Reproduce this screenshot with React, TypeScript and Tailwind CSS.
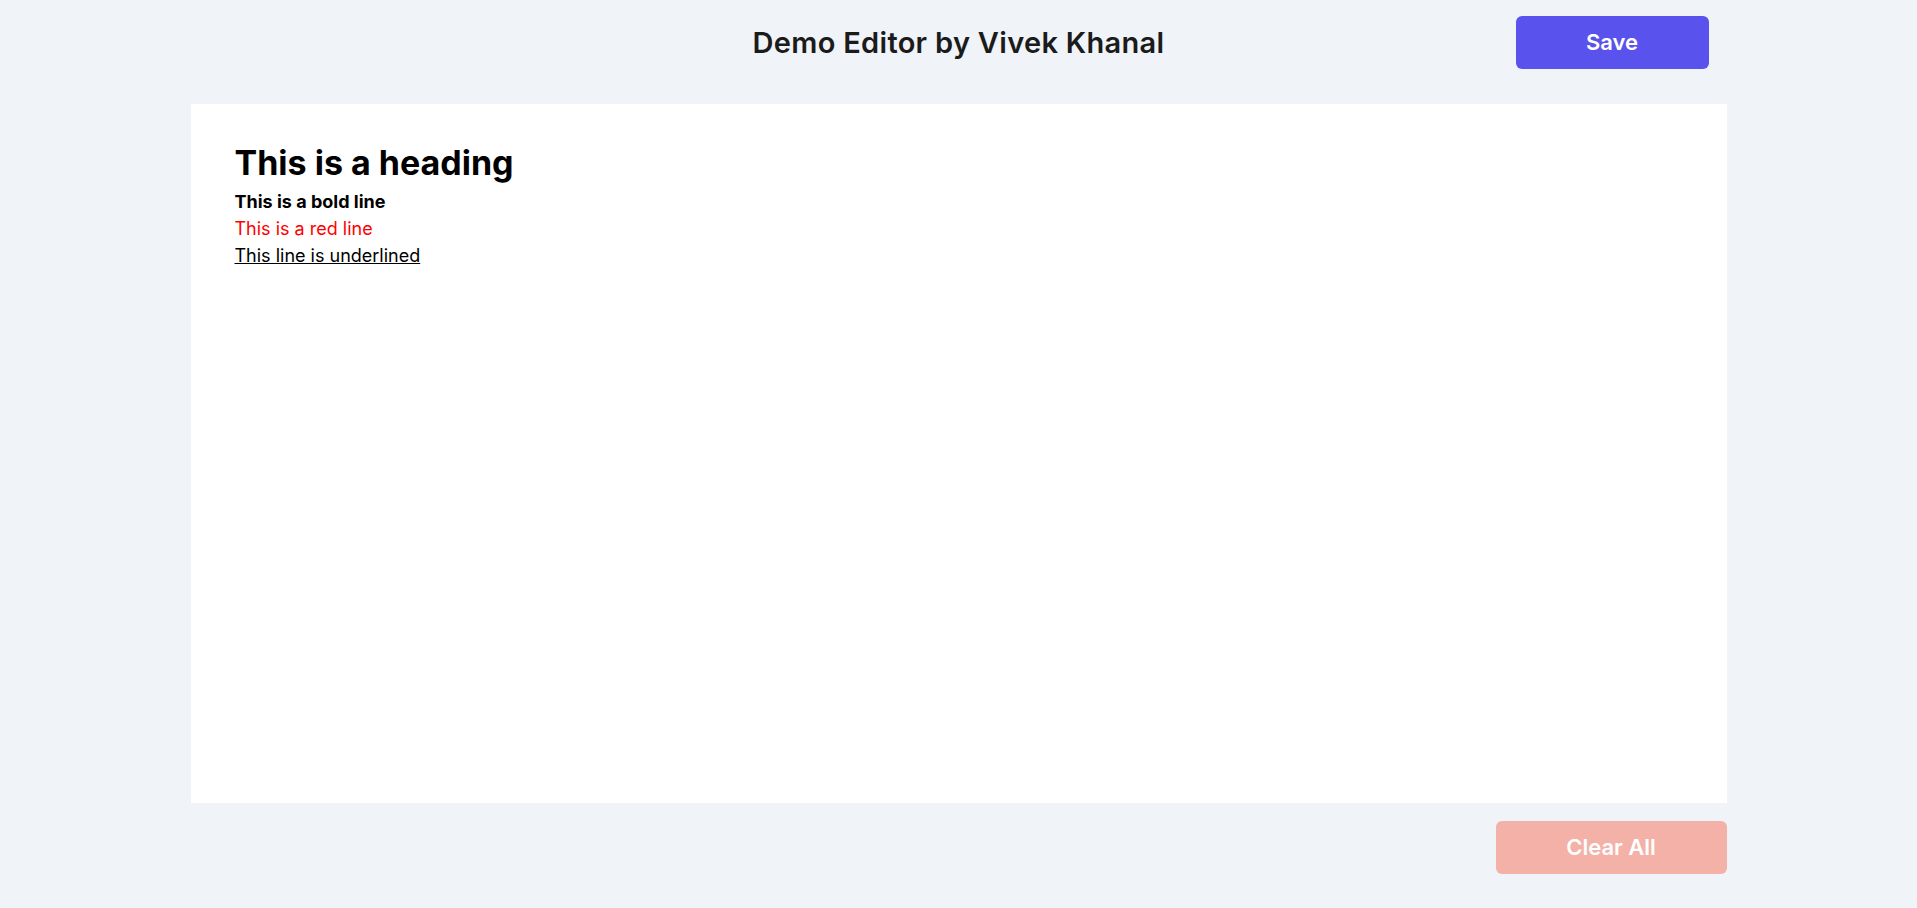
export default function App() {
  return (
    <div className="min-h-[908px] bg-[#f0f3f8] font-['Inter',sans-serif]">
      <div className="mx-auto max-w-[1536px]">
        <header className="grid h-[85px] grid-cols-[1fr_auto_1fr] items-center">
          <div />
          <h1 className="text-[29px] font-semibold tracking-[0.3px] text-[#1b1b1b]">Demo Editor by Vivek Khanal</h1>
          <div className="flex justify-end pr-[18px]">
            <button className="h-[53px] w-[193px] rounded-md bg-[#5a52ec] text-[22px] font-semibold text-white">
              Save
            </button>
          </div>
        </header>

        <main className="mt-[19px] h-[699px] bg-white pl-[44px] pt-[37px]">
          <h2 className="mb-[3px] text-[34px] font-bold leading-[44px] text-black">This is a heading</h2>
          <div className="text-lg leading-[27px] text-black">
            <p className="font-bold">This is a bold line</p>
            <p className="text-[#ff0000]">This is a red line</p>
            <p className="underline">This line is underlined</p>
          </div>
        </main>

        <div className="flex justify-end pt-[18px]">
          <button className="h-[53px] w-[231px] rounded-md bg-[#f3b1a8] text-[22px] font-semibold text-white">
            Clear All
          </button>
        </div>
      </div>
    </div>
  )
}
